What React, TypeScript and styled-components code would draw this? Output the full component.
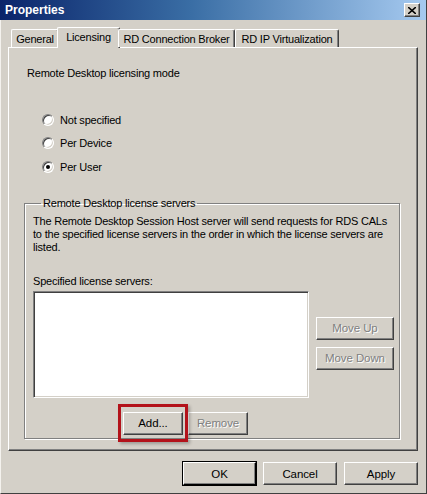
import React from "react";
import styled, { createGlobalStyle, css } from "styled-components";

const GlobalStyle = createGlobalStyle`
  html, body {
    margin: 0;
    padding: 0;
    background: #d4d0c8;
  }
  body {
    font-family: "Liberation Sans", Arial, sans-serif;
    font-size: 11px;
    letter-spacing: -0.2px;
    color: #000;
  }
  * {
    box-sizing: border-box;
  }
`;

const bevel = css`
  border: 1px solid;
  border-color: #ffffff #404040 #404040 #ffffff;
  box-shadow: inset -1px -1px 0 #808080;
`;

const Window = styled.div`
  width: 427px;
  height: 494px;
  background: #d4d0c8;
  border-right: 1px solid #404040;
  border-bottom: 1px solid #404040;
  border-left: 1px solid #f4f2ee;
  display: flex;
  flex-direction: column;
`;

const TitleBar = styled.div`
  height: 20px;
  margin-left: -1px;
  padding: 0 6px 0 5px;
  display: flex;
  align-items: center;
  justify-content: space-between;
  background: linear-gradient(to right, #0a246a 0%, #3a6ea5 45%, #a6caf0 100%);
`;

const Title = styled.span`
  color: #fff;
  font-weight: bold;
  font-size: 12px;
  letter-spacing: 0;
`;

const CloseButton = styled.div`
  ${bevel};
  width: 16px;
  height: 14px;
  background: #d4d0c8;
  display: flex;
  align-items: center;
  justify-content: center;
`;

const Body = styled.div`
  flex: 1;
  padding: 7px 8px 0 7px;
  display: flex;
  flex-direction: column;
`;

const TabRow = styled.div`
  display: flex;
  align-items: flex-end;
  height: 20px;
  padding-left: 3px;
  position: relative;
  z-index: 1;
`;

const Tab = styled.div<{ $active?: boolean; $width: number }>`
  width: ${(p) => p.$width}px;
  height: ${(p) => (p.$active ? 21 : 18)}px;
  margin-bottom: ${(p) => (p.$active ? -1 : 0)}px;
  margin-left: ${(p) => (p.$active ? -2 : 0)}px;
  margin-right: ${(p) => (p.$active ? -2 : 0)}px;
  background: #d4d0c8;
  border-top: 1px solid #fff;
  border-left: 1px solid #fff;
  border-right: 1px solid #404040;
  border-radius: 2px 2px 0 0;
  box-shadow: inset -1px 0 0 #808080;
  display: flex;
  align-items: ${(p) => (p.$active ? "flex-start" : "center")};
  padding-top: ${(p) => (p.$active ? 3 : 0)}px;
  justify-content: center;
  white-space: nowrap;
`;

const Panel = styled.div`
  height: 404px;
  border: 1px solid;
  border-color: #ffffff #404040 #404040 #ffffff;
  box-shadow: inset -1px -1px 0 #808080;
  padding: 19px 17px 0 15px;
  display: flex;
  flex-direction: column;
`;

const Heading = styled.div`
  line-height: 13px;
  padding-left: 3px;
`;

const RadioList = styled.div`
  margin-top: 28px;
  padding-left: 18px;
  display: flex;
  flex-direction: column;
`;

const RadioRow = styled.label`
  height: 23.5px;
  display: flex;
  align-items: center;
  gap: 6px;
`;

const RadioCircle = styled.span<{ $checked?: boolean }>`
  width: 12px;
  height: 12px;
  border-radius: 50%;
  background: #fff;
  border: 1px solid;
  border-color: #808080 #ffffff #ffffff #808080;
  box-shadow: inset 1px 1px 0 #404040, inset -1px -1px 0 #d4d0c8;
  display: flex;
  align-items: center;
  justify-content: center;
  &::after {
    content: "";
    width: 4px;
    height: 4px;
    border-radius: 50%;
    background: ${(p) => (p.$checked ? "#000" : "transparent")};
  }
`;

const Group = styled.fieldset`
  margin: 18px 0 0 0;
  padding: 3px 8px 3px 8px;
  border: 1px solid #808080;
  box-shadow: inset 1px 1px 0 #fff, 1px 1px 0 #fff;
  min-width: 0;
`;

const Legend = styled.legend`
  padding: 0 2px;
  margin-left: 8px;
  line-height: 13px;
`;

const Description = styled.p`
  margin: 2px 0 0;
  line-height: 13px;
  white-space: nowrap;
`;

const Label = styled.div`
  margin-top: 21px;
  line-height: 13px;
`;

const ListRow = styled.div`
  margin-top: 3px;
  display: flex;
  gap: 7px;
`;

const ListBox = styled.div`
  flex: 0 0 276px;
  height: 107px;
  background: #fff;
  border: 1px solid;
  border-color: #808080 #ffffff #ffffff #808080;
  box-shadow: inset 1px 1px 0 #404040, inset -1px -1px 0 #d4d0c8;
`;

const SideButtons = styled.div`
  flex-shrink: 0;
  padding-top: 26px;
  display: flex;
  flex-direction: column;
  gap: 7px;
`;

const Button = styled.button<{ $width: number; $default?: boolean }>`
  ${bevel};
  width: ${(p) => p.$width}px;
  height: 23px;
  padding: 0;
  background: #d4d0c8;
  font-family: "Liberation Sans", Arial, sans-serif;
  font-size: 11.5px;
  letter-spacing: -0.1px;
  color: #000;
  ${(p) =>
    p.$default &&
    css`
      outline: 1px solid #000;
      outline-offset: 0;
      border-color: #ffffff #000 #000 #ffffff;
    `}
  &:disabled {
    color: #808080;
    text-shadow: 1px 1px 0 #fff;
  }
`;

const ActionRow = styled.div`
  margin-top: 14px;
  padding-left: 90px;
  display: flex;
  gap: 5px;
`;

const Highlight = styled.div`
  position: relative;
  &::after {
    content: "";
    position: absolute;
    left: -5px;
    right: -5px;
    top: -8px;
    bottom: -7px;
    border: 3px solid #b3121a;
    box-shadow: 2px 2px 3px rgba(0, 0, 0, 0.25);
    pointer-events: none;
  }
`;

const Footer = styled.div`
  margin-top: 11px;
  display: flex;
  justify-content: flex-end;
  gap: 7px;
`;

const tabs = [
  { name: "General", width: 48 },
  { name: "Licensing", width: 63, active: true },
  { name: "RD Connection Broker", width: 117 },
  { name: "RD IP Virtualization", width: 104 },
];

const modes = [
  { name: "Not specified" },
  { name: "Per Device" },
  { name: "Per User", checked: true },
];

export default function App() {
  return (
    <>
      <GlobalStyle />
      <Window>
        <TitleBar>
          <Title>Properties</Title>
          <CloseButton>
            <svg width="8" height="7" viewBox="0 0 8 7">
              <path d="M0 0 L8 7 M8 0 L0 7" stroke="#000" strokeWidth="1.6" />
            </svg>
          </CloseButton>
        </TitleBar>
        <Body>
          <TabRow>
            {tabs.map((t) => (
              <Tab key={t.name} $active={t.active} $width={t.width}>
                {t.name}
              </Tab>
            ))}
          </TabRow>
          <Panel>
            <Heading>Remote Desktop licensing mode</Heading>
            <RadioList>
              {modes.map((m) => (
                <RadioRow key={m.name}>
                  <RadioCircle $checked={m.checked} />
                  {m.name}
                </RadioRow>
              ))}
            </RadioList>
            <Group>
              <Legend>Remote Desktop license servers</Legend>
              <Description>
                The Remote Desktop Session Host server will send requests for RDS CALs
                <br />
                to the specified license servers in the order in which the license servers are
                <br />
                listed.
              </Description>
              <Label>Specified license servers:</Label>
              <ListRow>
                <ListBox />
                <SideButtons>
                  <Button $width={78} disabled>
                    Move Up
                  </Button>
                  <Button $width={78} disabled>
                    Move Down
                  </Button>
                </SideButtons>
              </ListRow>
              <ActionRow>
                <Highlight>
                  <Button $width={60}>Add...</Button>
                </Highlight>
                <Button $width={60} disabled>
                  Remove
                </Button>
              </ActionRow>
            </Group>
          </Panel>
          <Footer>
            <Button $width={73} $default>
              OK
            </Button>
            <Button $width={74}>Cancel</Button>
            <Button $width={74}>Apply</Button>
          </Footer>
        </Body>
      </Window>
    </>
  );
}
